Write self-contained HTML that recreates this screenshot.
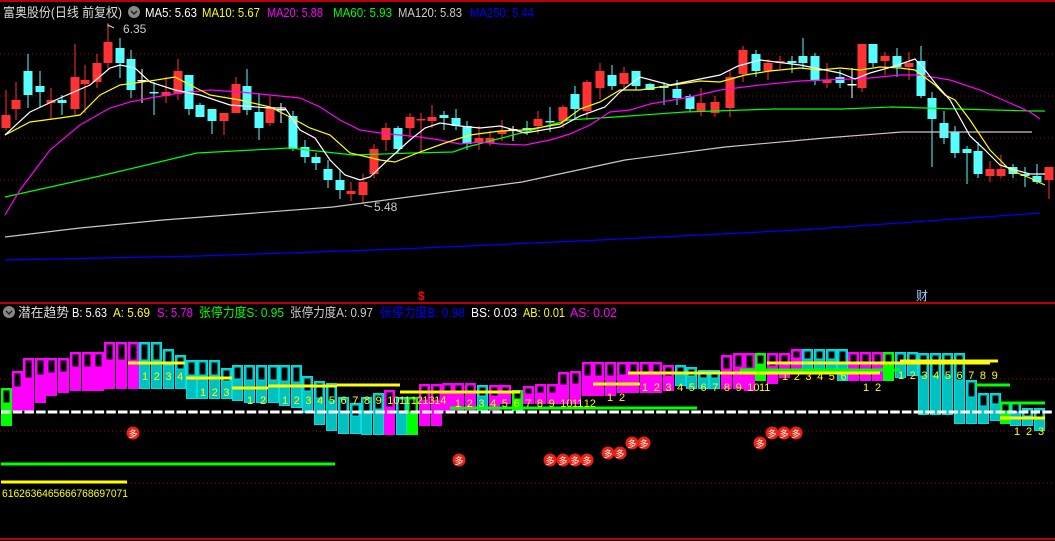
<!DOCTYPE html><html><head><meta charset="utf-8"><style>
html,body{margin:0;padding:0;background:#000;width:1055px;height:541px;overflow:hidden}
svg{display:block}
text{font-family:"Liberation Sans","Noto Sans CJK SC",sans-serif}
</style></head><body>
<svg id="s" width="1055" height="541" xmlns="http://www.w3.org/2000/svg">
<line x1="0" y1="1" x2="1055" y2="1" stroke="#b00" stroke-width="2"/>
<line x1="0" y1="303" x2="1055" y2="303" stroke="#b00" stroke-width="2"/>
<line x1="0" y1="539" x2="1055" y2="539" stroke="#b00" stroke-width="2"/>
<g stroke="#a00" stroke-dasharray="1,3" stroke-width="1">
<line x1="0" y1="54" x2="1055" y2="54"/><line x1="0" y1="96" x2="1055" y2="96"/><line x1="0" y1="138" x2="1055" y2="138"/><line x1="0" y1="180" x2="1055" y2="180"/>
<line x1="0" y1="379" x2="1055" y2="379"/><line x1="0" y1="431" x2="1055" y2="431"/><line x1="127" y1="483" x2="1055" y2="483"/>
</g>
<g id="cd"></g><g id="ma" fill="none" stroke-width="1.2"></g><g id="lb"></g>
<g font-size="13">
<text x="3" y="17" fill="#ddd" textLength="119" lengthAdjust="spacingAndGlyphs">富奥股份(日线 前复权)</text>
<circle cx="134" cy="12" r="6" fill="#888"/><path d="M131 11l3 3 3-3" stroke="#222" stroke-width="1.5" fill="none"/>
<text x="145" y="17" fill="#fff" textLength="52" lengthAdjust="spacingAndGlyphs">MA5: 5.63</text>
<text x="202" y="17" fill="#ff0" textLength="58" lengthAdjust="spacingAndGlyphs">MA10: 5.67</text>
<text x="267" y="17" fill="#f0f" textLength="56" lengthAdjust="spacingAndGlyphs">MA20: 5.88</text>
<text x="333" y="17" fill="#0f0" textLength="59" lengthAdjust="spacingAndGlyphs">MA60: 5.93</text>
<text x="398" y="17" fill="#ccc" textLength="64" lengthAdjust="spacingAndGlyphs">MA120: 5.83</text>
<text x="470" y="17" fill="#00f" textLength="64" lengthAdjust="spacingAndGlyphs">MA250: 5.44</text>
<text x="123" y="33" fill="#ccc" font-size="12">6.35</text>
<path d="M108 24v3M108 25l6 3" stroke="#ccc" fill="none"/>
<text x="374" y="211" fill="#ccc" font-size="12">5.48</text>
<path d="M364 205l8 2" stroke="#ccc"/>
<text x="418" y="300" fill="#f00" font-weight="bold" font-size="12">$</text>
<text x="916" y="300" fill="#9cf" font-size="12">财</text>
<circle cx="9" cy="312" r="6" fill="#888"/><path d="M6 311l3 3 3-3" stroke="#222" stroke-width="1.5" fill="none"/>
<text x="18" y="317" fill="#ddd" textLength="51" lengthAdjust="spacingAndGlyphs">潜在趋势</text>
<text x="72" y="317" fill="#fff" textLength="35" lengthAdjust="spacingAndGlyphs">B: 5.63</text>
<text x="113" y="317" fill="#ff0" textLength="37" lengthAdjust="spacingAndGlyphs">A: 5.69</text>
<text x="157" y="317" fill="#f0f" textLength="36" lengthAdjust="spacingAndGlyphs">S: 5.78</text>
<text x="199" y="317" fill="#0f0" textLength="85" lengthAdjust="spacingAndGlyphs">张停力度S: 0.95</text>
<text x="290" y="317" fill="#ccc" textLength="83" lengthAdjust="spacingAndGlyphs">张停力度A: 0.97</text>
<text x="380" y="317" fill="#00f" textLength="85" lengthAdjust="spacingAndGlyphs">张停力度B: 0.98</text>
<text x="471" y="317" fill="#fff" textLength="46" lengthAdjust="spacingAndGlyphs">BS: 0.03</text>
<text x="523" y="317" fill="#ff0" textLength="42" lengthAdjust="spacingAndGlyphs">AB: 0.01</text>
<text x="570" y="317" fill="#f0f" textLength="47" lengthAdjust="spacingAndGlyphs">AS: 0.02</text>
</g>
<g id="bars"></g><g id="hl"></g>
<g fill="#ff0" font-size="11" id="nums"></g>
<text x="2" y="497" fill="#ff0" font-size="11" textLength="126" lengthAdjust="spacingAndGlyphs">6162636465666768697071</text>
<g id="balls"></g>
</svg>
<script>
var NS="http://www.w3.org/2000/svg";
function el(p,t,a,txt){var e=document.createElementNS(NS,t);for(var k in a)e.setAttribute(k,a[k]);if(txt)e.textContent=txt;document.getElementById(p).appendChild(e);return e;}
var C=[[6,'r',115,128,90,130],[16,'r',100,109,82,120],[28,'c',71,95,54,108],[40,'c',86,92,71,107],[51,'r',100,103,88,120],[62,'c',100,103,95,115],[75,'r',77,109,44,115],[85,'r',80,84,65,113],[97,'r',63,82,54,88],[108,'r',42,63,23,70],[120,'c',48,63,38,78],[131,'c',59,90,50,98],[142,'x',80,80,69,103],[154,'c',92,93,82,115],[166,'r',92,96,77,103],[178,'r',71,94,59,100],[189,'c',75,109,75,115],[200,'c',105,117,103,117],[212,'c',109,121,109,134],[224,'r',113,121,113,135],[236,'r',84,113,77,113],[247,'c',86,110,69,115],[259,'c',112,128,93,140],[270,'r',107,123,96,126],[281,'x',109,109,103,123],[293,'c',116,149,111,151],[305,'c',147,157,140,163],[316,'c',157,163,153,170],[328,'c',169,180,160,188],[340,'c',180,190,169,199],[351,'r',191,194,182,201],[363,'r',182,195,174,204],[374,'r',149,174,144,178],[386,'r',128,140,123,151],[398,'c',128,149,126,153],[410,'r',117,128,113,138],[421,'r',119,120,113,153],[432,'r',117,121,105,128],[444,'c',115,118,111,130],[456,'c',118,126,109,130],[467,'c',126,144,121,150],[479,'r',138,143,126,150],[490,'r',138,143,131,146],[502,'r',131,134,120,141],[513,'x',129,129,126,141],[527,'c',128,130,121,135],[538,'r',119,126,111,134],[550,'c',121,122,107,132],[563,'r',107,121,105,128],[575,'c',94,109,86,120],[587,'r',82,111,80,120],[600,'r',71,88,63,99],[612,'c',75,86,65,90],[624,'r',73,84,67,89],[636,'c',71,86,71,90],[650,'c',84,90,83,90],[664,'c',86,88,82,105],[677,'c',89,98,80,105],[690,'c',96,109,94,112],[701,'r',103,111,88,116],[715,'r',102,113,96,117],[730,'r',77,108,70,117],[743,'r',50,74,46,82],[756,'c',54,71,50,77],[768,'r',63,71,59,80],[780,'r',61,63,56,69],[792,'c',61,63,56,73],[803,'c',56,63,38,69],[815,'c',56,81,53,85],[827,'r',80,83,63,88],[840,'c',77,83,70,88],[852,'x',84,84,68,98],[862,'r',44,88,44,92],[873,'c',44,63,44,67],[885,'r',56,61,52,75],[897,'c',56,67,48,77],[909,'r',63,67,52,80],[921,'c',61,96,46,98],[932,'c',98,119,92,167],[944,'c',123,138,111,144],[955,'c',132,153,126,158],[967,'c',149,153,146,184],[978,'c',151,174,142,178],[990,'r',169,176,161,182],[1001,'r',169,176,155,178],[1013,'c',167,174,164,178],[1025,'c',174,176,167,187],[1037,'c',176,182,164,184],[1049,'r',167,180,167,199]];
C.forEach(function(c){var col=c[1]=='r'?'#ff3333':c[1]=='c'?'#55ffff':'#fff';
el('cd','line',{x1:c[0],x2:c[0],y1:c[4],y2:c[5],stroke:col,'stroke-width':1});
var h=Math.max(c[3]-c[2],1.5);el('cd','rect',{x:c[0]-4.5,y:c[2],width:9,height:h,fill:col});});
function pl(col,pts){el('ma','polyline',{stroke:col,points:pts});}
pl('#c8c8c8','5,237 80,228 163,220 333,207 522,182 625,160 725,147 825,138 902,132 1032,132');
pl('#0000ff','5,260 200,256 400,249 600,240 800,230 1040,213');
pl('#00ff00','5,197 100,176 197,153 290,148 353,155 413,153 453,152 467,147 525,132 568,120 615,117 685,112 775,109 842,109 892,107 958,109 1032,111 1045,111');
pl('#ff00ff','5,215 20,190 50,150 80,125 110,108 130,102 150,98 180,93 210,90 240,92 270,95 300,98 320,107 340,120 360,130 380,133 420,137 440,140 460,144 480,142 500,144 525,145 550,140 570,134 590,125 610,112 630,110 650,104 690,97 720,90 760,85 800,81 850,79 870,78 900,75 920,75 950,80 980,90 1010,103 1030,112 1040,119');
pl('#ffff00','5,135 30,122 60,118 80,115 100,95 120,85 150,81 175,77 190,85 210,95 240,100 270,107 290,117 310,128 330,135 350,153 380,160 395,162 420,152 445,143 470,135 500,131 525,130 560,124 580,109 600,102 620,90 640,90 660,87 700,81 720,82 745,75 770,71 800,68 820,70 840,68 860,70 880,67 900,68 915,70 935,85 945,95 955,100 970,120 990,150 1010,170 1030,178 1045,185');
pl('#ffffff','5,135 30,112 60,98 90,85 110,68 120,65 135,68 150,82 175,90 200,95 230,105 270,108 285,108 300,130 315,138 330,160 345,175 360,180 370,177 390,158 410,140 425,128 440,123 460,126 480,128 500,126 525,133 560,127 580,116 605,107 620,92 640,77 670,85 700,79 720,75 738,66 760,60 800,65 840,73 855,79 870,73 895,66 915,59 925,70 935,83 950,100 960,118 970,136 985,150 1000,165 1015,170 1030,174 1045,174');
var B=[[1,'g',388,425],[12,'m',371,410],[23,'m',358,410],[35,'m',358,402],[46,'m',358,395],[58,'m',358,392],[70,'m',352,390],[82,'m',352,390],[93,'m',352,390],[104,'m',342,388],[116,'m',342,388],[128,'m',342,388],[139,'c',342,388],[151,'c',342,388],[163,'c',349,388],[175,'c',355,388],[186,'c',360,398],[197,'c',360,398],[209,'c',360,398],[221,'c',368,398],[232,'c',365,400],[244,'c',365,402],[256,'c',365,402],[268,'c',365,402],[279,'c',365,405],[291,'c',365,407],[302,'c',376,412],[314,'c',381,424],[326,'c',383,430],[338,'c',397,433],[350,'c',403,433],[361,'c',397,434],[373,'c',393,434],[384,'m',390,434],[396,'c',397,434],[407,'g',397,434],[419,'m',384,425],[431,'m',384,425],[442,'m',383,410],[453,'m',383,410],[465,'m',383,410],[477,'c',385,410],[489,'m',385,410],[500,'m',385,403],[512,'g',390,410],[523,'m',386,403],[535,'m',384,403],[547,'m',384,403],[558,'m',372,403],[570,'m',371,403],[582,'m',362,395],[593,'m',362,395],[605,'m',362,395],[617,'m',362,392],[628,'m',362,392],[640,'m',362,392],[651,'m',362,392],[663,'m',365,390],[675,'c',365,385],[686,'c',367,388],[698,'c',370,388],[709,'c',370,388],[721,'m',355,388],[733,'m',353,388],[744,'m',353,390],[755,'g',353,380],[767,'m',353,383],[779,'m',353,377],[791,'m',349,370],[802,'c',349,373],[814,'c',349,373],[826,'c',349,373],[837,'c',349,380],[848,'m',352,380],[860,'m',352,380],[872,'m',352,380],[883,'g',352,380],[895,'c',352,377],[907,'c',352,375],[918,'c',353,414],[930,'c',353,414],[942,'c',353,414],[954,'c',353,423],[966,'c',380,423],[978,'c',393,423],[990,'c',393,420],[1000,'g',402,423],[1010,'c',402,425],[1022,'c',408,425],[1034,'c',408,430]];
B.forEach(function(b){var col=b[1]=='m'?'#ff00ff':b[1]=='c'?'#00c0c0':'#00ff00';var oc=b[1]=='c'?'#00e0e0':col;
var h=b[3]-b[2];el('bars','rect',{x:b[0]+0.5,y:b[2]+0.5,width:10,height:h,fill:col,stroke:oc});
el('bars','rect',{x:b[0]+2,y:b[2]+2,width:7,height:Math.round(h*0.35),fill:'#000',stroke:oc});});
function hl(x1,x2,y,c,w){el('hl','line',{x1:x1,x2:x2,y1:y,y2:y,stroke:c,'stroke-width':w||3});}
for(var x=0;x<1050;x+=11.7)hl(x+1,x+10.5,412,'#fff',3);
hl(450,697,408,'#0f0',3);
hl(1,335,464,'#0f0',3);hl(1,127,482,'#ff0',3);
hl(128,185,363,'#ff0');hl(186,232,378,'#ff0');hl(232,268,388,'#ff0');hl(268,337,386,'#ff0');hl(337,400,385,'#ff0');hl(400,520,392,'#ff0');
hl(593,640,384,'#ff0');hl(628,740,373,'#ff0');hl(740,880,373,'#ff0');hl(767,990,363,'#ff0');hl(900,998,361,'#ff0');
hl(740,900,370,'#0f0');hl(975,1010,385,'#0f0');hl(1000,1045,403,'#0f0');hl(1000,1045,418,'#ff0');
function nums(x0,y,n,st){for(var i=0;i<n;i++)el('nums','text',{x:x0+i*st,y:y},String(i+1));}
nums(142,380,4,11.7);nums(200,396,3,11.7);nums(247,404,2,13);nums(282,404,14,11.7);nums(455,407,12,11.7);nums(607,401,2,12);nums(642,391,11,11.7);nums(782,380,6,11.7);nums(863,391,2,12);nums(898,379,9,11.7);nums(1014,435,3,12);
[[133,433],[459,460],[550,460],[563,460],[575,460],[587,460],[608,453],[620,453],[632,443],[644,443],[760,443],[772,433],[784,433],[796,433]].forEach(function(p){
el('balls','circle',{cx:p[0],cy:p[1],r:6.5,fill:'#e21'});el('balls','text',{x:p[0]-4.5,y:p[1]+4,fill:'#fff','font-size':9},'多');});
</script>
</body></html>
